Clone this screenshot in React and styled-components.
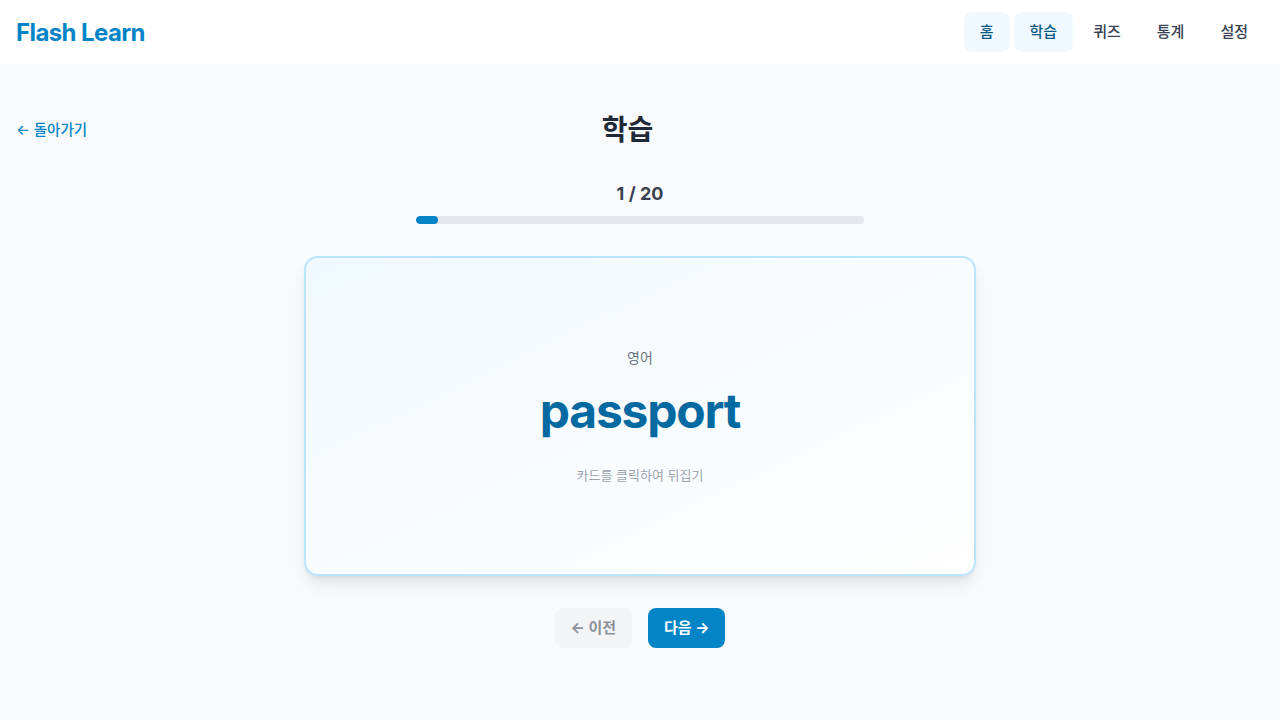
import React from "react";
import styled, { createGlobalStyle } from "styled-components";

const GlobalStyle = createGlobalStyle`
  * { box-sizing: border-box; }
  html, body { margin: 0; padding: 0; }
  body {
    background: #f9fafb;
    font-family: Inter, "Noto Sans CJK KR", "Noto Sans", sans-serif;
    color: #1f2937;
  }
`;

const Page = styled.div`
  min-height: 720px;
  background: #f9fafb;
`;

const Header = styled.header`
  height: 64px;
  background: #ffffff;
  display: flex;
  align-items: center;
  justify-content: space-between;
  padding: 0 16px;
`;

const Logo = styled.div`
  font-size: 24px;
  font-weight: 700;
  color: #0284c7;
  letter-spacing: -0.6px;
`;

const Nav = styled.nav`
  display: flex;
  gap: 4px;
`;

const NavItem = styled.a`
  display: block;
  padding: 10px 16px;
  font-size: 15px;
  line-height: 20px;
  font-weight: 500;
  border-radius: 8px;
  color: ${(p) => (p.$active ? "#0c5a85" : "#374151")};
  background: ${(p) => (p.$active ? "#f0f9ff" : "transparent")};
  cursor: pointer;
`;

const Main = styled.main`
  padding: 48px 16px 32px;
  display: flex;
  flex-direction: column;
  align-items: center;
`;

const TitleRow = styled.div`
  width: 100%;
  display: flex;
  align-items: center;
  margin-bottom: 32px;
`;

const BackLink = styled.a`
  display: flex;
  align-items: center;
  gap: 4px;
  font-size: 14.5px;
  line-height: 20px;
  font-weight: 500;
  color: #0284c7;
  cursor: pointer;
`;

const Title = styled.h1`
  flex: 1;
  margin: 0;
  text-align: center;
  font-size: 28px;
  line-height: 36px;
  font-weight: 700;
  color: #1f2937;
`;

const Spacer = styled.div`
  width: 96px;
`;

const ProgressLabel = styled.div`
  font-size: 18px;
  line-height: 28px;
  font-weight: 700;
  color: #374151;
  margin-bottom: 8px;
`;

const ProgressTrack = styled.div`
  width: 448px;
  height: 8px;
  background: #e5e7eb;
  border-radius: 9999px;
  overflow: hidden;
  margin-bottom: 32px;
`;

const ProgressFill = styled.div`
  height: 100%;
  background: #0284c7;
  border-radius: 9999px;
`;

const Card = styled.div`
  width: 672px;
  height: 320px;
  border: 2px solid #bae6fd;
  border-radius: 14px;
  background: linear-gradient(to bottom right, #f0f9ff, #ffffff);
  box-shadow: 0 10px 15px -3px rgba(0, 0, 0, 0.1), 0 4px 6px -4px rgba(0, 0, 0, 0.1);
  display: flex;
  flex-direction: column;
  align-items: center;
  justify-content: center;
  cursor: pointer;
  margin-bottom: 32px;
`;

const Lang = styled.div`
  font-size: 14px;
  line-height: 20px;
  color: #6b7280;
  margin-bottom: 19px;
`;

const Word = styled.div`
  font-size: 48px;
  line-height: 48px;
  font-weight: 700;
  color: #0369a1;
  letter-spacing: -1.2px;
`;

const Hint = styled.div`
  font-size: 13px;
  line-height: 20px;
  color: #9ca3af;
  margin-top: 30px;
`;

const ButtonRow = styled.div`
  display: flex;
  gap: 16px;
`;

const Button = styled.button`
  height: 40px;
  padding: 0 16px;
  border: none;
  border-radius: 8px;
  font-family: inherit;
  font-size: 15px;
  font-weight: 700;
  line-height: 20px;
  cursor: pointer;
  background: ${(p) => (p.$primary ? "#0284c7" : "#f3f4f6")};
  color: ${(p) => (p.$primary ? "#ffffff" : "#8b9099")};
`;

export default function App() {
  const current = 1;
  const total = 20;
  return (
    <Page>
      <GlobalStyle />
      <Header>
        <Logo>Flash Learn</Logo>
        <Nav>
          <NavItem $active>홈</NavItem>
          <NavItem $active>학습</NavItem>
          <NavItem>퀴즈</NavItem>
          <NavItem>통계</NavItem>
          <NavItem>설정</NavItem>
        </Nav>
      </Header>
      <Main>
        <TitleRow>
          <BackLink>← 돌아가기</BackLink>
          <Title>학습</Title>
          <Spacer />
        </TitleRow>
        <ProgressLabel>
          {current} / {total}
        </ProgressLabel>
        <ProgressTrack>
          <ProgressFill style={{ width: `${(current / total) * 100}%` }} />
        </ProgressTrack>
        <Card>
          <Lang>영어</Lang>
          <Word>passport</Word>
          <Hint>카드를 클릭하여 뒤집기</Hint>
        </Card>
        <ButtonRow>
          <Button disabled>← 이전</Button>
          <Button $primary>다음 →</Button>
        </ButtonRow>
      </Main>
    </Page>
  );
}
